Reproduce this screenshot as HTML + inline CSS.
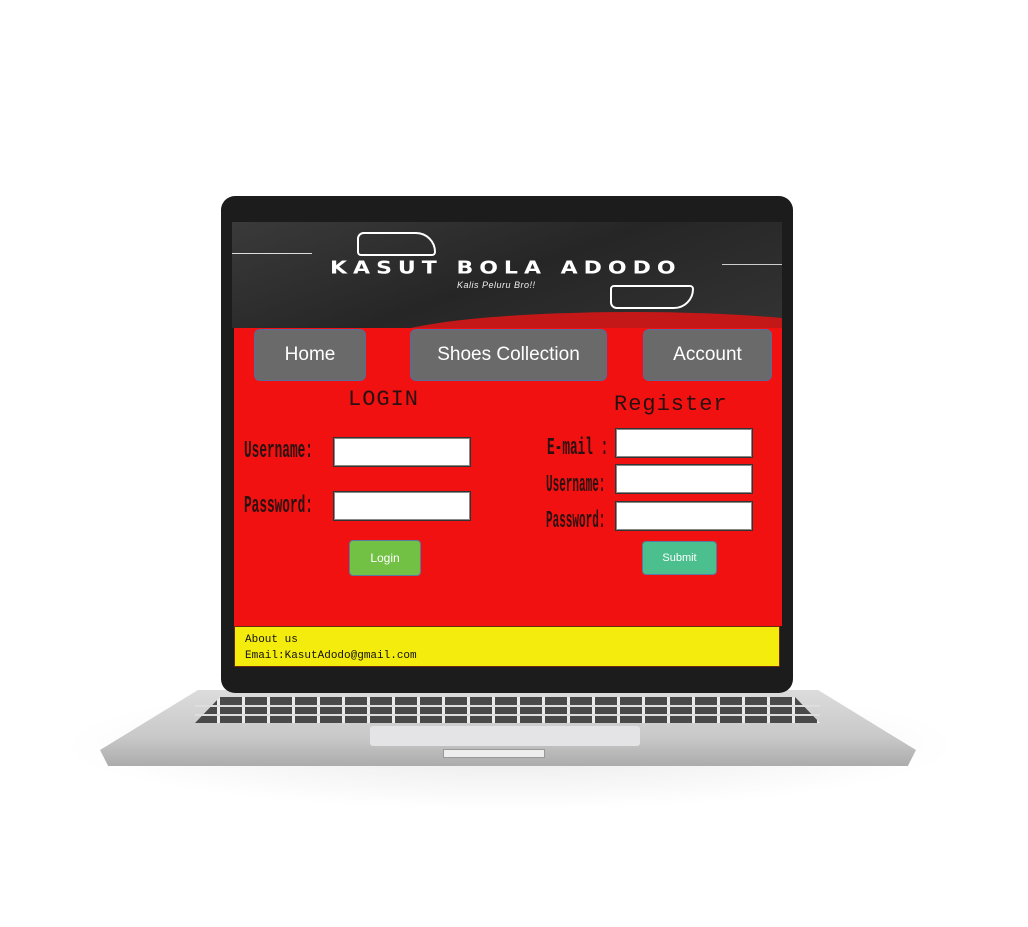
<!DOCTYPE html>
<html><head><style>
body{margin:0;width:1028px;height:927px;background:#fff;position:relative;overflow:hidden;font-family:"Liberation Sans",sans-serif}
.a{position:absolute}
.lbl{position:absolute;font-family:"Liberation Mono",monospace;font-weight:bold;color:#2a1010;font-size:22px;transform-origin:0 0;transform:scale(0.58,1.1);white-space:nowrap}
.lr{transform:scale(0.5,1.1)}
.inp{position:absolute;background:#fff;border:1px solid #333;box-shadow:inset 0 0 0 1px #888;width:136px;height:28px}
.nav{position:absolute;background:#6a6a6a;border:1px solid #5a6a9a;border-radius:6px;color:#fff;font-size:19px;display:flex;align-items:center;justify-content:center;top:329px;height:50px}
</style></head><body>
<div class="a" style="left:60px;top:680px;width:900px;height:130px;background:radial-gradient(ellipse at center,#e8e8e8 0%,#fff 70%)"></div>
<div class="a" style="left:100px;top:690px;width:816px;height:80px;background:linear-gradient(#dcdcdc,#c8c8c8 60%,#a8a8a8);clip-path:polygon(12% 0,88% 0,100% 75%,99% 95%,1% 95%,0 75%)"></div>
<div class="a" style="left:195px;top:697px;width:625px;height:26px;background:repeating-linear-gradient(90deg,#3a3a3a 0 22px,#eee 22px 25px);clip-path:polygon(4% 0,96% 0,100% 100%,0 100%);opacity:.9"></div>
<div class="a" style="left:195px;top:705px;width:625px;height:2px;background:#ddd"></div>
<div class="a" style="left:195px;top:714px;width:625px;height:2px;background:#ddd"></div>
<div class="a" style="left:370px;top:726px;width:270px;height:20px;background:#e4e4e6;border-radius:3px"></div>
<div class="a" style="left:443px;top:749px;width:100px;height:7px;background:#eee;border:1px solid #999"></div>
<div class="a" style="left:221px;top:196px;width:572px;height:497px;background:#1c1c1c;border-radius:14px"></div>
<div class="a" style="left:232px;top:222px;width:550px;height:106px;background:linear-gradient(160deg,#3a3a3a,#262626 50%,#333);overflow:hidden">
<div class="a" style="left:150px;top:90px;width:500px;height:60px;border-radius:50%;background:#c41818"></div>
<div class="a" style="left:0;top:31px;width:80px;height:1px;background:#ddd"></div>
<div class="a" style="left:490px;top:42px;width:60px;height:1px;background:#ccc"></div>
<div class="a" style="left:125px;top:10px;width:75px;height:20px;border:2px solid #fff;border-radius:10px 30px 6px 6px"></div>
<div class="a" style="left:378px;top:63px;width:80px;height:20px;border:2px solid #fff;border-radius:6px 6px 30px 10px"></div>
<div class="a" style="left:98px;top:34px;white-space:nowrap;color:#fff;font-weight:900;font-size:22px;letter-spacing:6px;font-family:'DejaVu Sans',sans-serif;transform:scaleY(0.8);transform-origin:0 50%">KASUT BOLA ADODO</div>
<div class="a" style="left:225px;top:58px;color:#eee;font-style:italic;font-size:9px;letter-spacing:.5px">Kalis Peluru Bro!!</div>
</div>
<div class="a" style="left:234px;top:328px;width:548px;height:298px;background:#f21111"></div>
<div class="nav" style="left:254px;width:110px">Home</div>
<div class="nav" style="left:410px;width:195px">Shoes Collection</div>
<div class="nav" style="left:643px;width:127px">Account</div>
<div class="a" style="left:348px;top:387px;font-family:'Liberation Mono',monospace;font-size:22px;color:#2a1010;letter-spacing:1px">LOGIN</div>
<div class="a" style="left:614px;top:392px;font-family:'Liberation Mono',monospace;font-size:22px;color:#2a1010;letter-spacing:1px">Register</div>
<div class="lbl" style="left:244px;top:437px">Username:</div>
<div class="lbl" style="left:244px;top:492px">Password:</div>
<div class="inp" style="left:333px;top:437px"></div>
<div class="inp" style="left:333px;top:491px"></div>
<div class="lbl" style="left:547px;top:434px">E-mail :</div>
<div class="lbl lr" style="left:546px;top:471px">Username:</div>
<div class="lbl lr" style="left:546px;top:507px">Password:</div>
<div class="inp" style="left:615px;top:428px"></div>
<div class="inp" style="left:615px;top:464px"></div>
<div class="inp" style="left:615px;top:501px"></div>
<div class="a" style="left:349px;top:540px;width:70px;height:34px;background:#72c044;border:1px solid #5a7aa0;border-radius:4px;color:#fff;font-size:12px;display:flex;align-items:center;justify-content:center">Login</div>
<div class="a" style="left:642px;top:541px;width:73px;height:32px;background:#4cbf8f;border:1px solid #5a7aa0;border-radius:4px;color:#fff;font-size:11px;display:flex;align-items:center;justify-content:center">Submit</div>
<div class="a" style="left:234px;top:626px;width:546px;background:#f4ec0c;border:1px solid #6a2a10;font-family:'Liberation Mono',monospace;font-size:11px;color:#111;padding-left:10px;line-height:16px;padding-top:5px;box-sizing:border-box;height:41px">About us<br>Email:KasutAdodo@gmail.com</div>
</body></html>
